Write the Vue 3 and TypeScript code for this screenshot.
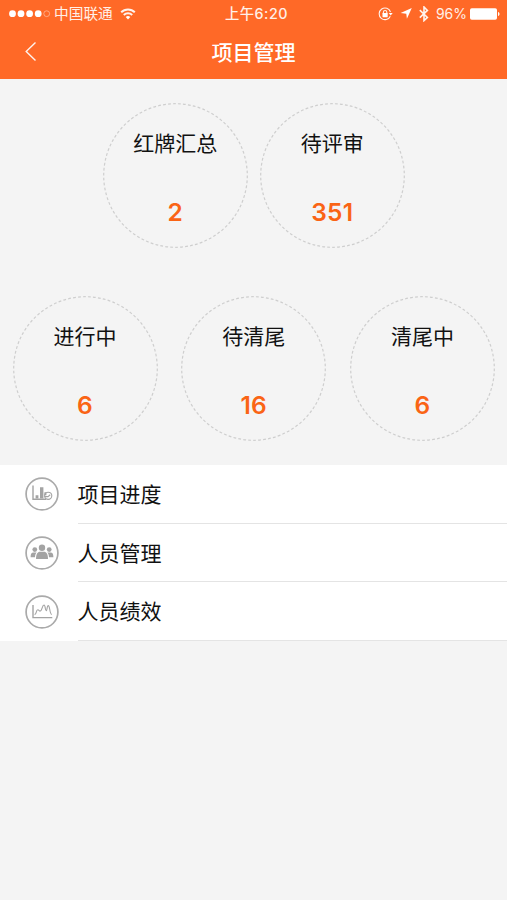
<script setup lang="ts">
interface Stat {
  label: string
  value: number
}

const statRows: Stat[][] = [
  [
    { label: '红牌汇总', value: 2 },
    { label: '待评审', value: 351 },
  ],
  [
    { label: '进行中', value: 6 },
    { label: '待清尾', value: 16 },
    { label: '清尾中', value: 6 },
  ],
]

const menu: { label: string; icon: 'progress' | 'people' | 'performance' }[] = [
  { label: '项目进度', icon: 'progress' },
  { label: '人员管理', icon: 'people' },
  { label: '人员绩效', icon: 'performance' },
]
</script>

<template>
  <main class="screen">
    <header class="header">
      <div class="status">
        <div class="status-left">
          <svg class="signal" width="42" height="10" viewBox="0 0 42 10">
            <circle cx="3.5" cy="4.7" r="3.4" />
            <circle cx="12" cy="4.7" r="3.4" />
            <circle cx="20.6" cy="4.7" r="3.4" />
            <circle cx="29.2" cy="4.7" r="3.4" />
            <circle class="hollow" cx="37.7" cy="4.7" r="2.9" />
          </svg>
          <span class="carrier">中国联通</span>
          <svg class="wifi" width="16" height="12" viewBox="0 0 16 12">
            <path d="M1.2 4.2a9.6 9.6 0 0 1 13.6 0" />
            <path d="M3.8 7a5.9 5.9 0 0 1 8.4 0" />
            <path class="solid" d="M5.7 9.1a3.2 3.2 0 0 1 4.6 0L8 11.5z" />
          </svg>
        </div>
        <span class="time">上午6:20</span>
        <div class="status-right">
          <svg class="lock" width="15" height="14" viewBox="0 0 15 14">
            <path d="M12.3 9.2A5.8 5.8 0 1 1 12.5 5" />
            <path class="solid" d="M10.7 6h4l-2 2.6z" />
            <path d="M5.4 6.5V5.2a1.7 1.7 0 0 1 3.4 0v1.3" />
            <rect class="solid" x="4.5" y="6" width="5.2" height="4.2" rx=".4" />
          </svg>
          <svg class="location" width="12" height="11" viewBox="0 0 12 11">
            <path class="solid" d="M11.8 0 6.9 10.8 6.3 5.7.6 5.1z" />
          </svg>
          <svg class="bluetooth" width="10" height="16" viewBox="0 0 10 16">
            <path d="m.8 4.2 7.6 7.2L5 14.6V1l3.4 3.4L.8 11.6" />
          </svg>
          <span class="percent">96%</span>
          <svg class="battery" width="30" height="12" viewBox="0 0 30 12">
            <rect class="solid" x="0" y=".3" width="27" height="11.4" rx="1.8" />
            <path class="solid" d="M28 4c2 .3 2 3.7 0 4z" />
          </svg>
        </div>
      </div>
      <nav class="nav">
        <svg class="back" width="12" height="20" viewBox="0 0 12 20">
          <path d="M10.5.6 1.2 9.6l9.3 9" />
        </svg>
        <h1 class="title">项目管理</h1>
      </nav>
    </header>

    <section class="stats">
      <div v-for="(row, i) in statRows" :key="i" class="stat-row" :class="{ wide: row.length > 2 }">
        <div v-for="stat in row" :key="stat.label" class="stat">
          <svg class="ring" width="145" height="145" viewBox="0 0 145 145">
            <circle cx="72.5" cy="72.5" r="71.8" pathLength="450" />
          </svg>
          <span class="stat-label">{{ stat.label }}</span>
          <span class="stat-value">{{ stat.value }}</span>
        </div>
      </div>
    </section>

    <ul class="menu">
      <li v-for="item in menu" :key="item.label" class="item">
        <svg class="item-icon" width="34" height="34" viewBox="0 0 34 34">
          <circle class="rim" cx="17" cy="17" r="15.9" />
          <g v-if="item.icon === 'progress'">
            <path class="line" d="M8 8.5v13.7h13" />
            <path class="fill" d="M10.6 18.2h2.8v3.2h-2.8zM15 10.2h3.4v11.2H15zM19.4 15.2h2v3h-2z" />
            <circle class="line thin" cx="23.2" cy="18.8" r="3.6" />
            <path class="line thin" d="M19.4 19.6h3.6l2.2-1.8" />
          </g>
          <g v-else-if="item.icon === 'people'" class="fill">
            <circle cx="17" cy="11.8" r="3.2" />
            <circle cx="9.8" cy="13.6" r="2.4" />
            <circle cx="24.2" cy="13.6" r="2.4" />
            <path d="M11 23c0-4.8 1.6-7.2 4-7.2h4c2.4 0 4 2.4 4 7.2z" />
            <path d="M5.6 21.2c0-3.2 1-4.6 2.8-4.6h3.2c-1 1.2-1.5 2.8-1.6 4.6z" />
            <path d="M28.4 21.2c0-3.2-1-4.6-2.8-4.6h-3.2c1 1.2 1.5 2.8 1.6 4.6z" />
          </g>
          <g v-else>
            <path class="line" d="M8 10v12.6h19.3" />
            <path class="line thin" d="M9.6 19.6c2.2-.4 1.2-4.8 3.2-4.8 1.4 0 1.3 1.3 2.3 1.3 2.2 0 1.9-6.1 3.9-6.1 1.6 0 1 5.6 2.2 5.6s.5-5 2-5c1.9 0 1.2 8.3 3.6 8.9" />
          </g>
        </svg>
        <span class="item-label">{{ item.label }}</span>
      </li>
    </ul>
  </main>
</template>

<style>
body {
  background: #f4f4f4;
}
</style>

<style scoped>
.screen {
  min-height: 900px;
  background: #f4f4f4;
  color: #111;
  font-family: Inter, 'Noto Sans CJK SC', sans-serif;
}

svg {
  display: block;
  flex: none;
}

.header {
  height: 79px;
  background: #ff6927;
  color: #fff;
}

.header svg {
  fill: none;
  stroke: #fff3ed;
}

.header .solid {
  fill: #fff;
  stroke: none;
}

.status {
  display: grid;
  grid-template-columns: 1fr auto 1fr;
  grid-template-rows: 27px;
  align-items: center;
  height: 27px;
  padding: 0 7px 0 9px;
  color: #fff0e8;
  font-size: 14px;
  line-height: 27px;
}

.status-left,
.status-right {
  display: flex;
  align-items: center;
  height: 27px;
}

.status-right {
  justify-content: flex-end;
}

.header .signal {
  fill: #fff;
  stroke: none;
}

.header .signal .hollow {
  fill: none;
  stroke: #ffb797;
  stroke-width: 0.8;
}

.carrier {
  margin-left: 3px;
  padding-top: 1px;
  font-size: 14.7px;
  line-height: 27px;
}

.wifi {
  margin-left: 7px;
  stroke-width: 2;
}

.time {
  padding-left: 4px;
  font-size: 14.3px;
  font-weight: 500;
  letter-spacing: 0.5px;
}

.lock {
  stroke-width: 1.1;
}

.location {
  margin-left: 7px;
}

.bluetooth {
  margin-left: 7px;
  stroke-width: 1.6;
}

.percent {
  margin: 0 3px 0 7px;
  font-size: 14px;
}

.nav {
  display: grid;
  grid-template-columns: 80px 1fr 80px;
  grid-template-rows: 50px;
  align-items: center;
  height: 50px;
}

.back {
  margin-left: 25px;
  stroke-width: 1.4;
}

.title {
  margin: 0;
  padding-top: 1px;
  font-size: 21px;
  font-weight: 500;
  line-height: 50px;
  text-align: center;
}

.stats {
  display: flex;
  flex-direction: column;
  gap: 48px;
  padding: 24px 12px 24px 12.5px;
}

.stat-row {
  display: flex;
  justify-content: center;
  gap: 12px;
}

.stat-row.wide {
  justify-content: space-between;
}

.stat {
  display: grid;
  grid-template-rows: 82px 56px;
  justify-items: center;
  width: 145px;
  height: 145px;
  text-align: center;
}

.ring {
  grid-area: 1 / 1 / 3 / 2;
  fill: none;
  stroke: #cecece;
  stroke-width: 1.2;
  stroke-dasharray: 2.8 2.2;
}

.stat-label {
  grid-area: 1 / 1;
  font-size: 21px;
  line-height: 82px;
}

.stat-value {
  grid-area: 2 / 1;
  color: #fa6415;
  font-size: 24.5px;
  font-weight: 600;
  letter-spacing: 0.2px;
  line-height: 54px;
}

.menu {
  margin: 0;
  padding: 0;
  background: #fff;
  list-style: none;
}

.item {
  display: flex;
  align-items: stretch;
  height: 58.67px;
}

.item-icon {
  align-self: center;
  margin: 0 18.5px 0 25px;
}

.rim {
  fill: none;
  stroke: #aaa;
  stroke-width: 1.7;
}

.fill {
  fill: #a3a3a3;
}

.line {
  fill: none;
  stroke: #a3a3a3;
  stroke-width: 1.4;
}

.line.thin {
  stroke-width: 1.1;
}

.item-label {
  flex: 1;
  border-bottom: 1px solid #e4e4e4;
  font-size: 21px;
  line-height: 60px;
}
</style>
